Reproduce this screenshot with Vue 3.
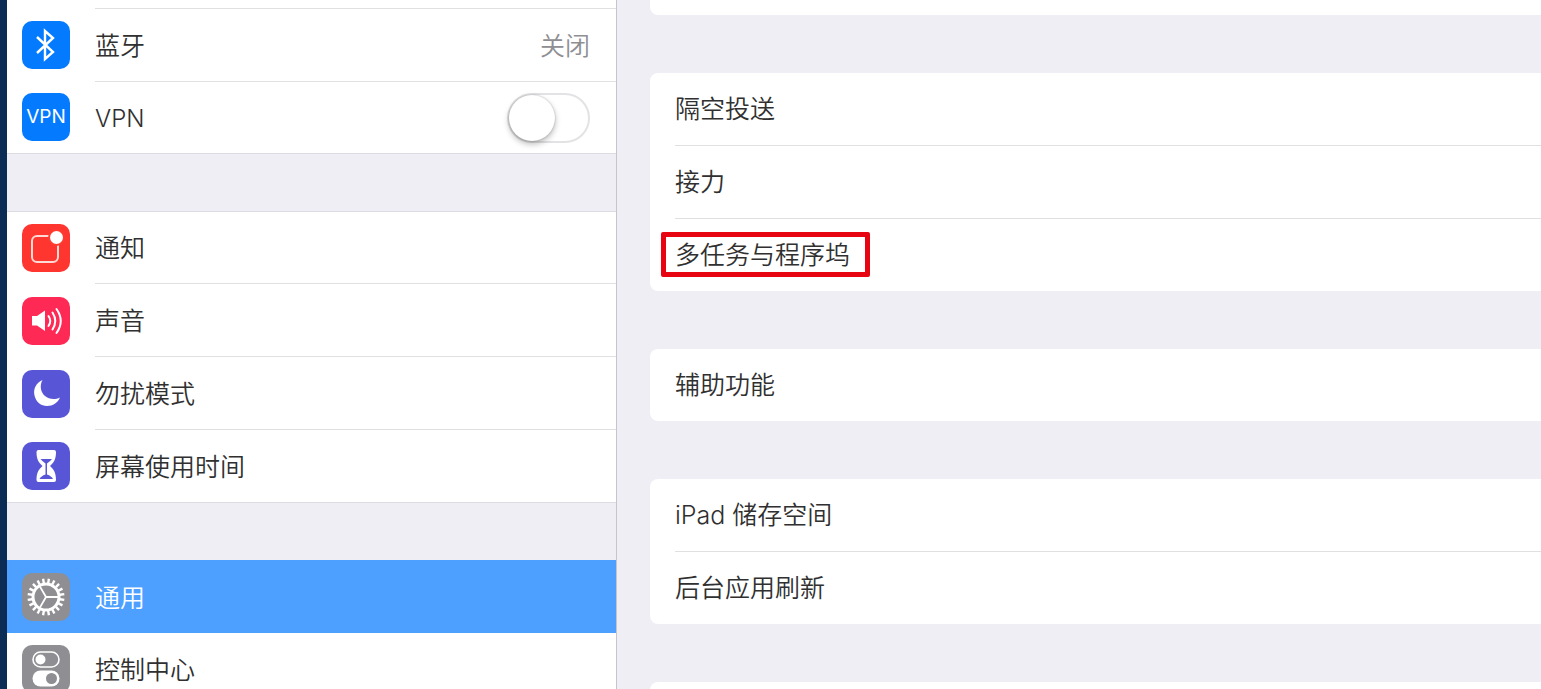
<script setup>
import { ref } from 'vue'

const vpnOn = ref(false)

const network = [
  { id: 'bluetooth', label: '蓝牙', value: '关闭' },
  { id: 'vpn', label: 'VPN', toggle: true },
]
const alerts = [
  { id: 'notify', label: '通知' },
  { id: 'sound', label: '声音' },
  { id: 'moon', label: '勿扰模式' },
  { id: 'hourglass', label: '屏幕使用时间' },
]
const general = [
  { id: 'gear', label: '通用', active: true },
  { id: 'control', label: '控制中心' },
]
const groups = [network, alerts, general]

const cards = [
  [{ label: '隔空投送' }, { label: '接力' }, { label: '多任务与程序坞', marked: true }],
  [{ label: '辅助功能' }],
  [{ label: 'iPad 储存空间' }, { label: '后台应用刷新' }],
]

const teeth = Array.from({ length: 20 }, (_, i) => i * 18)
</script>

<template>
  <div class="screen">
    <nav class="sidebar" aria-label="设置">
      <div class="group partial"></div>
      <div v-for="(group, g) in groups" :key="g" class="group" :class="{ joined: g === 0 }">
        <component
          :is="item.toggle ? 'label' : 'button'"
          v-for="item in group"
          :key="item.id"
          class="row"
          :class="{ active: item.active }"
          :type="item.toggle ? null : 'button'"
        >
          <span class="icon" :class="item.id">
            <svg v-if="item.id === 'bluetooth'" viewBox="0 0 48 48" aria-hidden="true">
              <path d="M15 16 L31 31 L23 38 V10 L31 17 L15 32" fill="none" stroke="#fff" stroke-width="2.400" stroke-linejoin="miter" />
            </svg>
            <span v-else-if="item.id === 'vpn'" class="vpn-text" aria-hidden="true">VPN</span>
            <svg v-else-if="item.id === 'notify'" viewBox="0 0 48 48" aria-hidden="true">
              <rect x="10" y="12" width="26" height="26" rx="5" fill="none" stroke="#ffd9d4" stroke-width="2" />
              <circle cx="34.500" cy="13.500" r="8.500" fill="#ff3b30" />
              <circle cx="34.500" cy="13.500" r="6.500" fill="#fff" />
            </svg>
            <svg v-else-if="item.id === 'sound'" viewBox="0 0 48 48" aria-hidden="true">
              <path d="M10 19 H15 L23 13.500 V34 L15 28.500 H10 Z" fill="#fff" />
              <path d="M26.500 19 Q30 24 26.500 29 M30.500 15.500 Q36 24 30.500 32.500 M34.500 12 Q43 24 34.500 36" fill="none" stroke="#fff" stroke-width="2" stroke-linecap="round" />
            </svg>
            <svg v-else-if="item.id === 'moon'" viewBox="0 0 48 48" aria-hidden="true">
              <path d="M20.500 10 C14 13 11 19 12.500 25.500 C14 32 19 36 25 36 C31 36 35.500 33 38 27.500 C33 30 27 29.500 23 26 C18.500 22 17.500 15.500 20.500 10 Z" fill="#fff" />
            </svg>
            <svg v-else-if="item.id === 'hourglass'" viewBox="0 0 48 48" aria-hidden="true">
              <path d="M16.500 8 H32 Q34 8 34 10 C34 18 31.500 20.500 28 24 C31.500 27.500 34 30 34 38 Q34 40 32 40 H16.500 Q14.500 40 14.500 38 C14.500 30 17 27.500 20.500 24 C17 20.500 14.500 18 14.500 10 Q14.500 8 16.500 8 Z" fill="#fff" />
              <path d="M18.500 17 H30 Q28 19.500 25 21.500 V32.500 Q29.500 34 31 37 H17.500 Q19 34 23.500 32.500 V21.500 Q20.500 19.500 18.500 17 Z" fill="#5856d6" />
            </svg>
            <svg v-else-if="item.id === 'gear'" viewBox="0 0 48 48" aria-hidden="true">
              <g stroke="#fff" fill="none">
                <path v-for="a in teeth" :key="a" d="M24 5.500 V10" stroke-width="2.400" :transform="`rotate(${a + 9} 24 24)`" />
                <circle cx="24" cy="24" r="13" stroke-width="3" />
                <path d="M24 24 H36 M24 24 L18 13.600 M24 24 L18 34.400" stroke-width="1.800" />
              </g>
            </svg>
            <svg v-else viewBox="0 0 48 48" aria-hidden="true">
              <rect x="11" y="7" width="26" height="15" rx="7.500" fill="none" stroke="#fff" stroke-width="1.600" />
              <circle cx="18.500" cy="14.500" r="5" fill="#fff" />
              <rect x="10.500" y="25.500" width="27" height="16" rx="8" fill="#fff" />
              <circle cx="29.500" cy="33.500" r="5.500" fill="#8e8e93" />
            </svg>
          </span>
          <span class="content">
            <span class="text">{{ item.label }}</span>
            <span v-if="item.value" class="text value">{{ item.value }}</span>
            <input v-if="item.toggle" v-model="vpnOn" class="switch" type="checkbox" role="switch" />
          </span>
        </component>
      </div>
    </nav>

    <main class="detail">
      <section class="card first"></section>
      <section v-for="(card, c) in cards" :key="c" class="card">
        <button v-for="item in card" :key="item.label" type="button" class="item">
          <span class="text" :class="{ marked: item.marked }">{{ item.label }}</span>
        </button>
      </section>
      <section class="card last"></section>
    </main>
  </div>
</template>

<style>
body {
  margin: 0;
  background: #efeef5;
}
</style>

<style scoped>
.screen {
  display: flex;
  height: 100vh;
  overflow: hidden;
  box-sizing: border-box;
  border-left: 7px solid #0b2d55;
  background: #efeef5;
  color: #303030;
  font-family: Inter, "Noto Sans CJK SC", sans-serif;
  font-size: 25px;
  font-weight: 350;
  line-height: 36px;
}

.sidebar {
  flex: 0 1 609px;
  min-width: 0;
  border-right: 1px solid #c6c5cb;
}

.group {
  margin-bottom: 58px;
  background: #fff;
  box-shadow: inset 0 1px 0 #dddce2, 0 1px 0 #dddce2;
}

.group.partial {
  height: 8px;
  margin: 0;
  box-shadow: none;
}

.group.joined {
  box-shadow: 0 1px 0 #dddce2;
}

.row,
.item {
  display: flex;
  box-sizing: border-box;
  width: 100%;
  margin: 0;
  border: 0;
  background: none;
  color: inherit;
  font: inherit;
  text-align: left;
}

.row {
  align-items: center;
  gap: 25px;
  height: 73px;
  padding: 0 0 0 15px;
}

.row:last-child {
  height: 72px;
}

.icon {
  display: flex;
  flex: none;
  align-items: center;
  justify-content: center;
  width: 48px;
  height: 48px;
  border-radius: 10px;
}

.icon svg {
  width: 48px;
  height: 48px;
}

.bluetooth,
.vpn {
  background: #047aff;
}

.notify {
  background: #ff3630;
}

.sound {
  background: #ff2955;
}

.moon,
.hourglass {
  background: #5856d6;
}

.gear,
.control {
  background: #8e8e93;
}

.vpn-text {
  color: #fff;
  font-size: 19px;
  font-weight: 400;
}

.content {
  display: flex;
  flex: 1;
  align-items: center;
  justify-content: space-between;
  align-self: stretch;
  padding-right: 26px;
  border-bottom: 1px solid #e0e0e3;
}

.content .text {
  padding-top: 2px;
}

.vpn + .content .text {
  font-size: 24px;
}

.row:last-child .content,
.active .content {
  border-bottom: 0;
}

.group.joined .content {
  border-bottom: 0;
  border-top: 1px solid #e0e0e3;
}

.active {
  background: #4da0ff;
  color: #fff;
}

.value {
  color: #8e8e93;
}

.switch {
  appearance: none;
  display: flex;
  align-items: center;
  box-sizing: border-box;
  width: 83px;
  height: 50px;
  margin: 0;
  border: 2px solid #e3e3e5;
  border-radius: 25px;
  background: #fff;
}

.switch::before {
  content: "";
  width: 46px;
  height: 46px;
  border-radius: 50%;
  background: #fff;
  box-shadow: 0 3px 6px rgba(0, 0, 0, 0.28), 0 0 2px rgba(0, 0, 0, 0.25);
}

.switch:checked {
  justify-content: flex-end;
  background: #4cd964;
}

.detail {
  display: flex;
  flex: 1;
  flex-direction: column;
  gap: 58px;
  min-width: 0;
  padding-left: 33px;
}

.card {
  flex: none;
  border-radius: 8px 0 0 8px;
  background: #fff;
}

.card.first {
  height: 15px;
  border-top-left-radius: 0;
}

.card.last {
  height: 72px;
}

.item {
  padding: 0 0 0 25px;
}

.item .text {
  position: relative;
  padding: 18px 0;
}

.item + .item {
  border-top: 1px solid transparent;
  background: linear-gradient(#e0e0e3, #e0e0e3) 25px 0 / 100% 1px no-repeat border-box;
}

.marked::after {
  content: "";
  position: absolute;
  inset: 13px -20px 14px -14px;
  border: 5px solid #e60510;
  border-radius: 2px;
}
</style>
